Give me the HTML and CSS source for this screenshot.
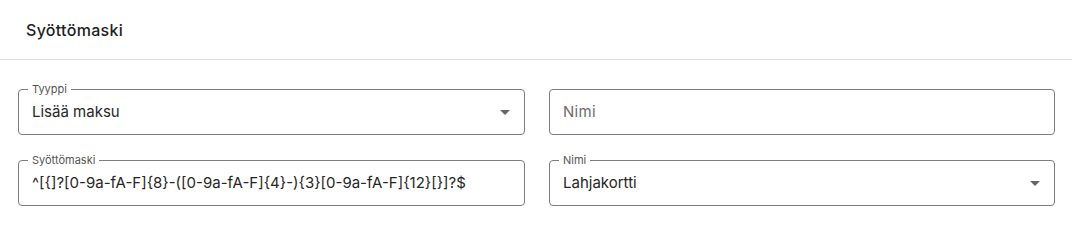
FILE: index.html
```html
<!DOCTYPE html>
<html lang="fi">
<head>
<meta charset="utf-8">
<link rel="stylesheet" href="styles.css">
</head>
<body>
<div class="dialog">
  <div class="title">Syöttömaski</div>
  <div class="content">
    <div class="field">
      <span class="label">Tyyppi</span>
      <div class="value">Lisää maksu</div>
      <span class="arrow"></span>
    </div>
    <div class="field">
      <div class="value placeholder">Nimi</div>
    </div>
    <div class="field">
      <span class="label">Syöttömaski</span>
      <div class="value">^[{]?[0-9a-fA-F]{8}-([0-9a-fA-F]{4}-){3}[0-9a-fA-F]{12}[}]?$</div>
    </div>
    <div class="field">
      <span class="label">Nimi</span>
      <div class="value">Lahjakortti</div>
      <span class="arrow"></span>
    </div>
  </div>
</div>
</body>
</html>
```

FILE: styles.css
```css
html, body {
  margin: 0;
  padding: 0;
  background: #ffffff;
}
body {
  font-family: "Inter", "Liberation Sans", sans-serif;
  color: #222222;
}
.dialog {
  width: 1072px;
  height: 230px;
  background: #fff;
}
.title {
  height: 60px;
  box-sizing: border-box;
  padding: 20px 26px 0;
  font-size: 16px;
  font-weight: 500;
  line-height: 20px;
  letter-spacing: 0.3px;
  color: #1e1e1e;
  border-bottom: 1px solid #e2e2e2;
}
.content {
  display: grid;
  grid-template-columns: 507px 506px;
  column-gap: 24px;
  row-gap: 25px;
  padding: 29px 17px 0 18px;
}
.field {
  position: relative;
  height: 46px;
  box-sizing: border-box;
  border: 1px solid #7c7c7c;
  border-radius: 4px;
  display: flex;
  align-items: center;
  padding: 0 13px;
}
.label {
  position: absolute;
  top: -8px;
  left: 9px;
  padding: 0 4px;
  background: #fff;
  font-size: 11px;
  line-height: 14px;
  color: #555;
}
.value {
  flex: 1;
  font-size: 15px;
  line-height: 20px;
  color: #262626;
  white-space: nowrap;
}
.placeholder {
  color: #6b6b6b;
  letter-spacing: 0.3px;
}
.arrow {
  width: 0;
  height: 0;
  border-left: 5px solid transparent;
  border-right: 5px solid transparent;
  border-top: 5px solid #666;
  margin-right: 1px;
}
```
